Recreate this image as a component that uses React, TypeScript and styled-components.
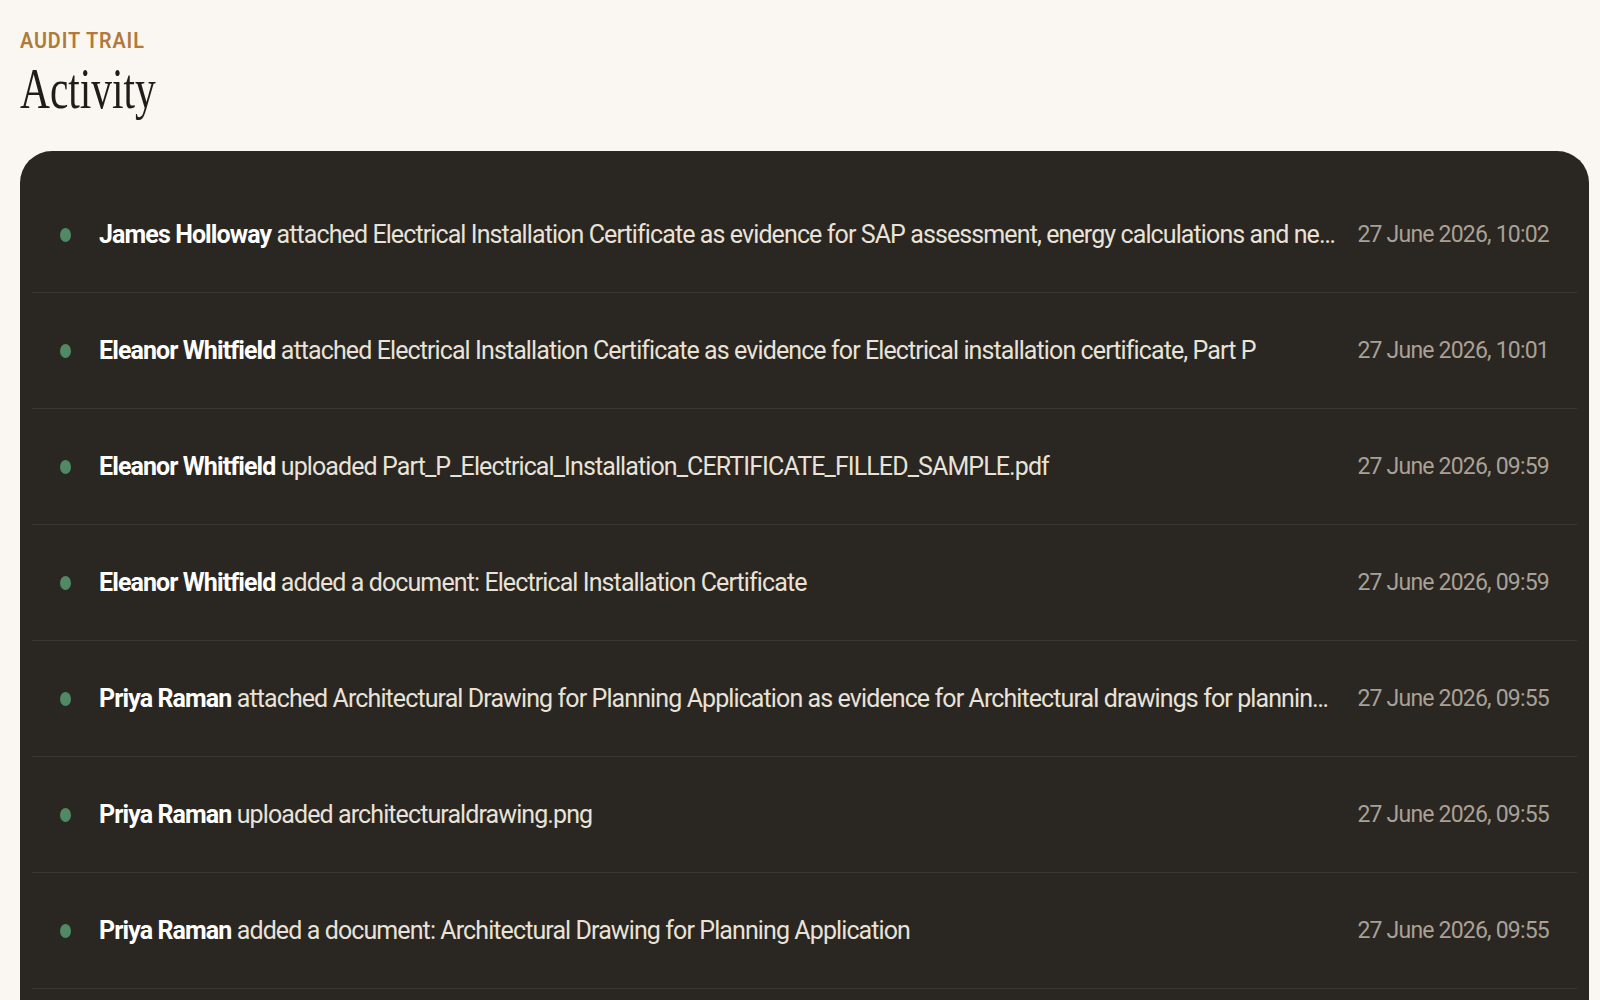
import React from 'react';
import styled, { createGlobalStyle } from 'styled-components';

const Global = createGlobalStyle`
  body { margin: 0; background: #faf7f2; font-family: Roboto, "Liberation Sans", sans-serif; }
`;

const Page = styled.div`
  padding: 28px 11px 0 20px;
`;

const Eyebrow = styled.div`
  color: #b07a3a;
  font-size: 22px;
  font-weight: 600;
  letter-spacing: 1px;
  text-transform: uppercase;
  transform: scaleX(0.9);
  transform-origin: left;
`;

const Title = styled.h1`
  margin: 4px 0 30px;
  font-family: "Liberation Serif", "DejaVu Serif", serif;
  font-weight: 400;
  font-size: 56px;
  line-height: 64px;
  color: #1f1c19;
  transform: scaleX(0.74);
  transform-origin: left;
`;

const Card = styled.div`
  background: #2a2622;
  border-radius: 32px 32px 0 0;
  padding: 26px 12px 0;
`;

const Row = styled.div`
  display: flex;
  align-items: center;
  height: 115px;
  padding: 0 28px;
  border-bottom: 1px solid #3b3631;
  gap: 20px;
`;

const Dot = styled.span`
  flex: none;
  width: 11px;
  height: 14px;
  border-radius: 50%;
  background: #4f8a64;
  margin-right: 8px;
`;

const Text = styled.div`
  flex: 1;
  min-width: 0;
  white-space: nowrap;
  overflow: hidden;
  text-overflow: ellipsis;
  color: #e8e2d8;
  font-size: 25px;
  letter-spacing: -0.9px;
`;

const Name = styled.strong`
  color: #fff;
  font-weight: 700;
`;

const When = styled.div`
  flex: none;
  color: #a8a196;
  font-size: 23px;
  letter-spacing: -0.8px;
`;

const items = [
  ['James Holloway', 'attached Electrical Installation Certificate as evidence for SAP assessment, energy calculations and new-build compliance', '27 June 2026, 10:02'],
  ['Eleanor Whitfield', 'attached Electrical Installation Certificate as evidence for Electrical installation certificate, Part P', '27 June 2026, 10:01'],
  ['Eleanor Whitfield', 'uploaded Part_P_Electrical_Installation_CERTIFICATE_FILLED_SAMPLE.pdf', '27 June 2026, 09:59'],
  ['Eleanor Whitfield', 'added a document: Electrical Installation Certificate', '27 June 2026, 09:59'],
  ['Priya Raman', 'attached Architectural Drawing for Planning Application as evidence for Architectural drawings for planning application', '27 June 2026, 09:55'],
  ['Priya Raman', 'uploaded architecturaldrawing.png', '27 June 2026, 09:55'],
  ['Priya Raman', 'added a document: Architectural Drawing for Planning Application', '27 June 2026, 09:55'],
  ['Priya Raman', 'created the project', '27 June 2026, 09:50'],
];

export default function App() {
  return (
    <Page>
      <Global />
      <Eyebrow>Audit Trail</Eyebrow>
      <Title>Activity</Title>
      <Card>
        {items.map(([n, t, d], i) => (
          <Row key={i}>
            <Dot />
            <Text>
              <Name>{n}</Name> {t}
            </Text>
            <When>{d}</When>
          </Row>
        ))}
      </Card>
    </Page>
  );
}
